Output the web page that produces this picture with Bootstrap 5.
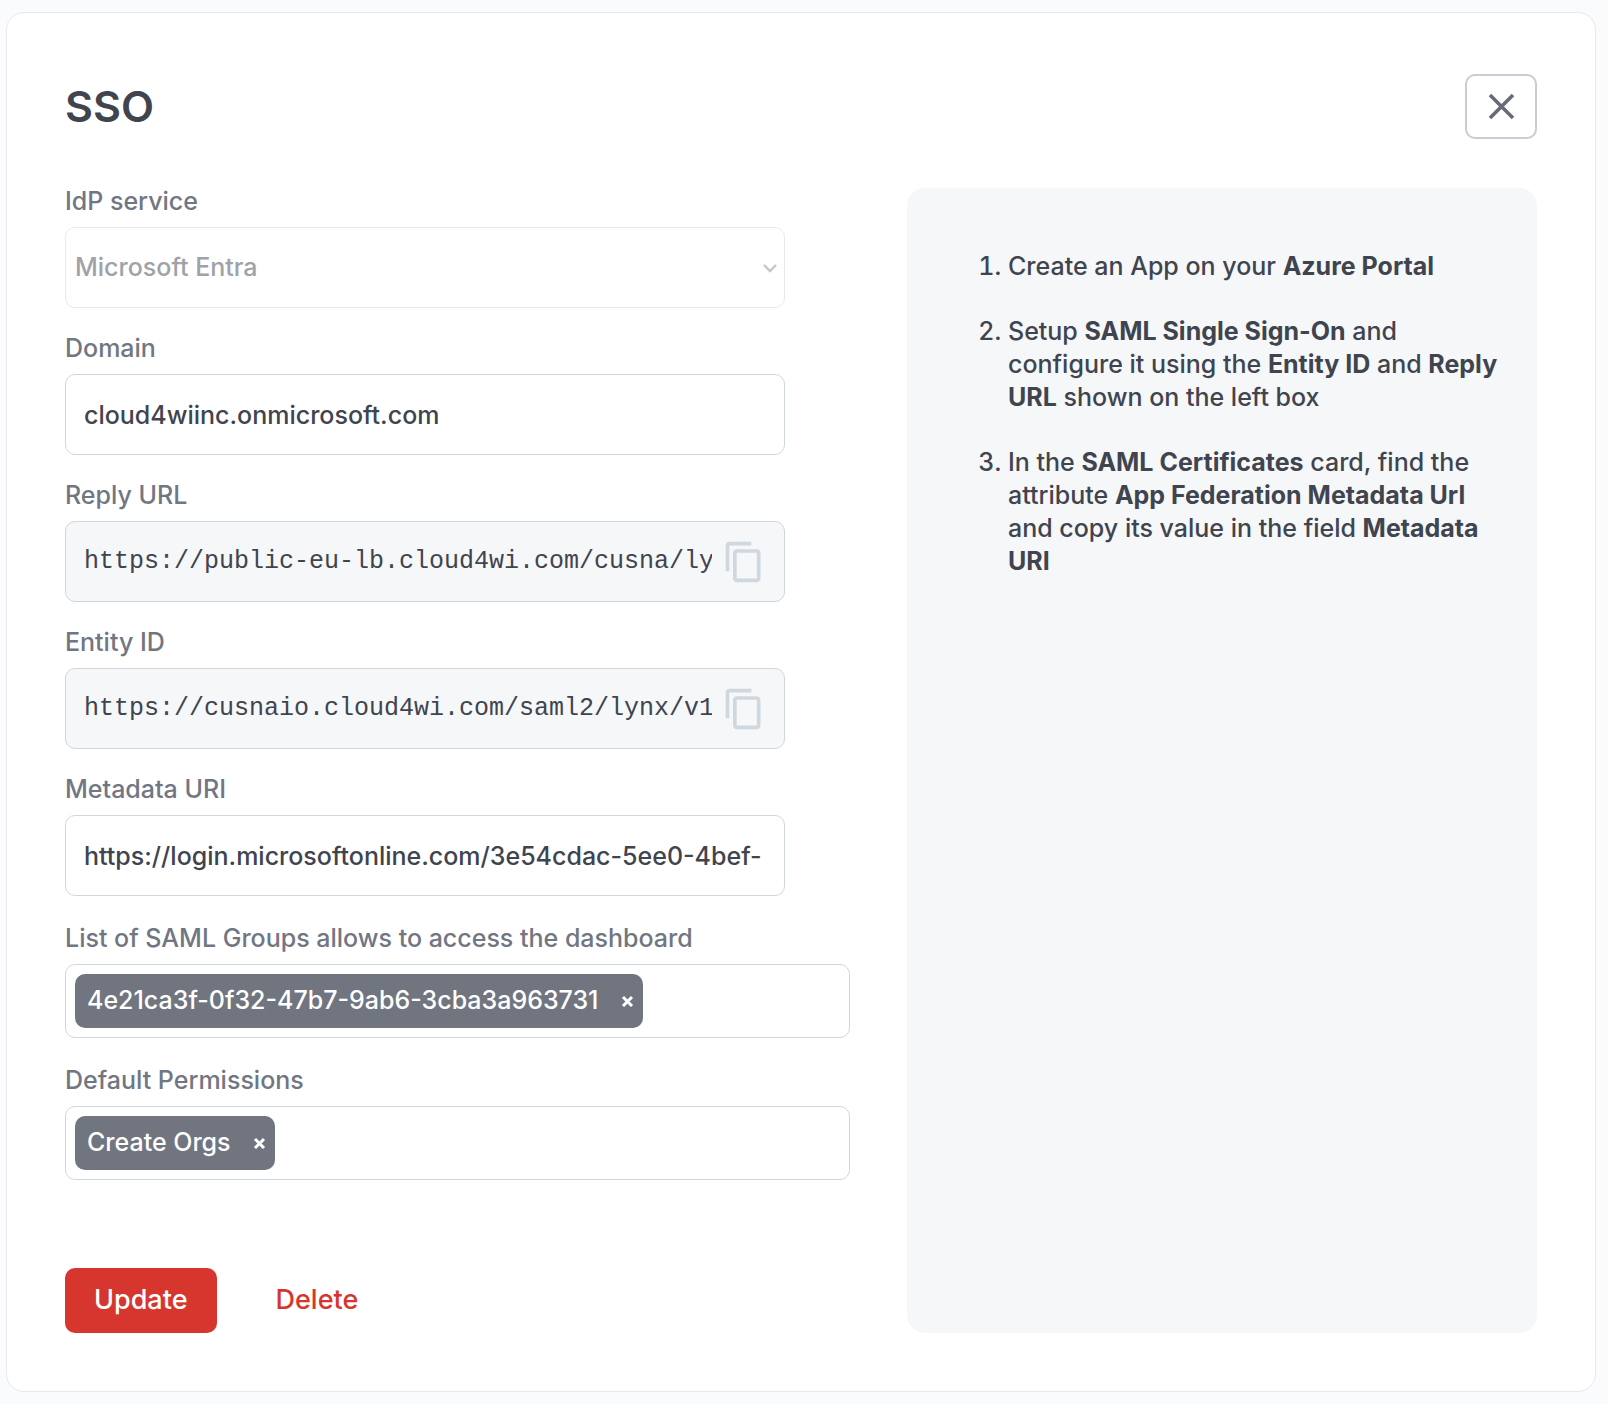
<!DOCTYPE html>
<html lang="en">
<head>
<meta charset="utf-8">
<meta name="viewport" content="width=device-width, initial-scale=1">
<title>SSO</title>
<link href="https://cdn.jsdelivr.net/npm/bootstrap@5.3.0/dist/css/bootstrap.min.css" rel="stylesheet">
<style>
:root{--ink:#40444f;--muted:#717683;--line:#cfd7de;--soft:#f6f7f9;--brand:#d6362d}
body{background:#fafbfd;color:var(--ink);font-family:Inter,sans-serif;font-size:25px;font-weight:500;line-height:33px}
.sso-card{margin:12px 12px 12px 6px;padding:61px 58px 58px;border:1px solid #e8e8ee;border-radius:18px}
.sso-head{margin-bottom:49px}
.sso-title{font-size:43px;line-height:54px;font-weight:600;padding-bottom:2px}
.btn-close-box{width:72px;height:65px;border:2px solid #cbcad5;border-radius:10px;color:#666b76}
.sso-body{gap:57px}
.sso-form{flex:1 1 0;min-width:0}
.field-block{margin:0 65px 27px 0}
.tag-block{margin-top:29px}
.field-label{display:block;margin-bottom:13px;line-height:26px;color:var(--muted)}
.field-box{height:81px;border:1px solid var(--line);border-radius:10px;padding:0 18px;font-size:25px;font-weight:500;color:var(--ink);background-color:#fff}
.field-box:disabled{padding-left:9px;color:#a0a2a8;border-color:#e6eaee;opacity:1;background:#fff url("data:image/svg+xml,%3Csvg xmlns='http://www.w3.org/2000/svg' viewBox='0 0 14 10'%3E%3Cpath d='M1 2l6 6 6-6' fill='none' stroke='%23c6c6c8' stroke-width='2.4'/%3E%3C/svg%3E") no-repeat right 7px center/14px 10px}
.copy-box{background:var(--soft);gap:10px}
.copy-box input{min-width:0;border:0;padding:0;background:transparent;color:var(--ink);font:25px/33px "Liberation Mono",monospace;outline-offset:4px}
.copy-btn{color:#cfd8de}
.tag-box{min-height:74px;padding:9px;gap:9px;border:1px solid var(--line);border-radius:10px}
.tag-chip{flex:none;height:54px;padding:0 9px 1px 12px;gap:22px;border-radius:10px;background:#717580;color:#fff}
.tag-chip button{color:#fff;line-height:0}
.tag-entry{flex:1 1 0;min-width:0;border:0;outline:0;background:transparent}
.sso-actions{margin-top:88px;gap:30px}
.sso-actions .btn{height:65px;padding:0 29px;border-radius:10px;border:0;font-size:27px;font-weight:500}
.btn-update,.btn-update:hover{background:var(--brand);color:#fff}
.btn-delete,.btn-delete:hover{color:var(--brand)}
.help-panel{flex:0 0 42.8%;padding:62px 28px 60px 64px;border-radius:18px;background:var(--soft)}
.help-panel ol{padding-left:37px}
.help-panel li+li{margin-top:32px}
.help-panel strong{font-weight:700}
@media (max-width:991px){.sso-body{flex-direction:column}.field-block{margin-right:0}.sso-form,.help-panel{flex:none}}
</style>
</head>
<body>
<main class="sso-card bg-white">
  <header class="sso-head d-flex justify-content-between align-items-center">
    <h1 class="sso-title mb-0">SSO</h1>
    <button type="button" class="btn btn-close-box bg-white p-0 d-flex align-items-center justify-content-center" aria-label="Close">
      <svg width="28" height="28" viewBox="0 0 28 28" fill="none" stroke="currentColor" stroke-width="3.6" aria-hidden="true"><path d="M3 2L26 25M26 2L3 25"/></svg>
    </button>
  </header>
  <div class="sso-body d-flex">
    <form class="sso-form">
      <div class="field-block">
        <label class="field-label" for="idp">IdP service</label>
        <select class="form-select field-box" id="idp" disabled><option>Microsoft Entra</option></select>
      </div>
      <div class="field-block">
        <label class="field-label" for="domain">Domain</label>
        <input class="form-control field-box" id="domain" type="text" value="cloud4wiinc.onmicrosoft.com">
      </div>
      <div class="field-block">
        <label class="field-label" for="reply">Reply URL</label>
        <div class="field-box copy-box d-flex align-items-center">
          <input class="flex-grow-1" id="reply" type="text" readonly value="https://public-eu-lb.cloud4wi.com/cusna/lynx">
          <button type="button" class="btn copy-btn p-0 border-0 lh-1" aria-label="Copy reply URL"><svg width="44" height="44" viewBox="0 0 24 24" fill="currentColor" aria-hidden="true"><path d="M16 1H4c-1.100 0-2 .9-2 2v14h2V3h12V1zm3 4H8c-1.100 0-2 .9-2 2v14c0 1.100.9 2 2 2h11c1.100 0 2-.9 2-2V7c0-1.100-.9-2-2-2zm0 16H8V7h11v14z"/></svg></button>
        </div>
      </div>
      <div class="field-block">
        <label class="field-label" for="entity">Entity ID</label>
        <div class="field-box copy-box d-flex align-items-center">
          <input class="flex-grow-1" id="entity" type="text" readonly value="https://cusnaio.cloud4wi.com/saml2/lynx/v1">
          <button type="button" class="btn copy-btn p-0 border-0 lh-1" aria-label="Copy entity ID"><svg width="44" height="44" viewBox="0 0 24 24" fill="currentColor" aria-hidden="true"><path d="M16 1H4c-1.100 0-2 .9-2 2v14h2V3h12V1zm3 4H8c-1.100 0-2 .9-2 2v14c0 1.100.9 2 2 2h11c1.100 0 2-.9 2-2V7c0-1.100-.9-2-2-2zm0 16H8V7h11v14z"/></svg></button>
        </div>
      </div>
      <div class="field-block">
        <label class="field-label" for="metadata">Metadata URI</label>
        <input class="form-control field-box" id="metadata" type="text" value="https://login.microsoftonline.com/3e54cdac-5ee0-4bef-">
      </div>
      <div class="tag-block">
        <label class="field-label" for="groups">List of SAML Groups allows to access the dashboard</label>
        <div class="tag-box d-flex">
          <span class="tag-chip d-inline-flex align-items-center text-nowrap">4e21ca3f-0f32-47b7-9ab6-3cba3a963731<button type="button" class="btn p-0 border-0" aria-label="Remove group"><svg width="13" height="13" viewBox="0 0 13 13" fill="none" stroke="currentColor" stroke-width="3" aria-hidden="true"><path d="M2 3L11 12M11 3L2 12"/></svg></button></span>
          <input class="tag-entry" id="groups" type="text">
        </div>
      </div>
      <div class="tag-block">
        <label class="field-label" for="permissions">Default Permissions</label>
        <div class="tag-box d-flex">
          <span class="tag-chip d-inline-flex align-items-center text-nowrap">Create Orgs<button type="button" class="btn p-0 border-0" aria-label="Remove permission"><svg width="13" height="13" viewBox="0 0 13 13" fill="none" stroke="currentColor" stroke-width="3" aria-hidden="true"><path d="M2 3L11 12M11 3L2 12"/></svg></button></span>
          <input class="tag-entry" id="permissions" type="text">
        </div>
      </div>
      <div class="sso-actions d-flex">
        <button type="submit" class="btn btn-update">Update</button>
        <button type="button" class="btn btn-delete">Delete</button>
      </div>
    </form>
    <aside class="help-panel">
      <ol class="mb-0">
        <li>Create an App on your <strong>Azure Portal</strong></li>
        <li>Setup <strong>SAML Single Sign-On</strong> and configure it using the <strong>Entity ID</strong> and <strong>Reply URL</strong> shown on the left box</li>
        <li>In the <strong>SAML Certificates</strong> card, find the attribute <strong>App Federation Metadata Url</strong> and copy its value in the field <strong>Metadata URI</strong></li>
      </ol>
    </aside>
  </div>
</main>
<script src="https://cdn.jsdelivr.net/npm/bootstrap@5.3.0/dist/js/bootstrap.bundle.min.js"></script>
</body>
</html>
